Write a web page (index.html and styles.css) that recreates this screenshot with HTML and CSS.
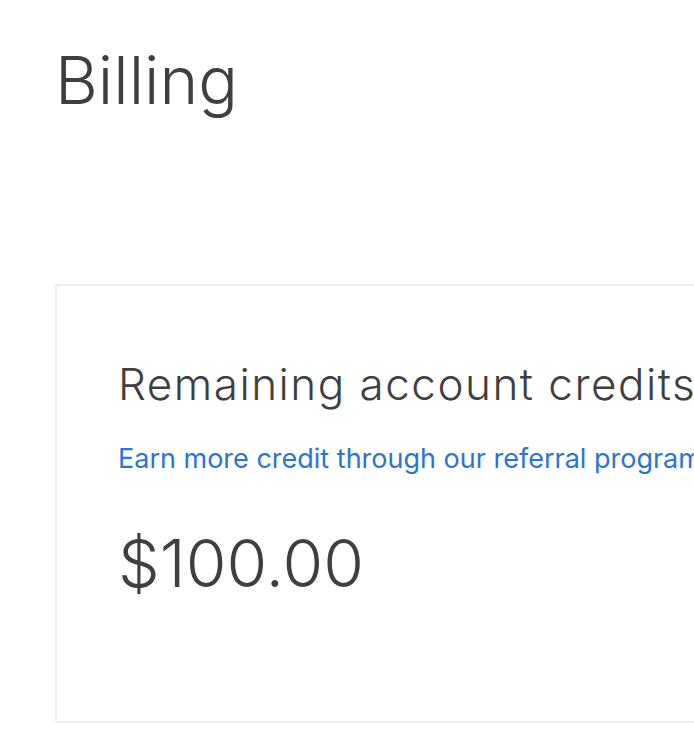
FILE: index.html
```html
<!DOCTYPE html>
<html lang="en">
<head>
<meta charset="utf-8">
<title>Billing</title>
<link rel="stylesheet" href="styles.css">
</head>
<body>
<main class="page">
  <h1 class="page-title">Billing</h1>
  <section class="card">
    <h2 class="card-title">Remaining account credits</h2>
    <a class="card-link" href="#">Earn more credit through our referral program</a>
    <div class="amount">$100.00</div>
  </section>
</main>
</body>
</html>
```

FILE: styles.css
```css
html, body {
  margin: 0;
  padding: 0;
  background: #ffffff;
  overflow: hidden;
}

body {
  font-family: Inter, "Liberation Sans", sans-serif;
  color: #3f3f3f;
}

.page {
  padding-left: 55px;
  width: 1100px;
}

.page-title {
  margin: 47px 0 0 0;
  font-size: 66px;
  line-height: 1;
  font-weight: 300;
  color: #3f3f3f;
}

.card {
  margin-top: 171px;
  width: 900px;
  border: 2px solid #ececec;
  border-radius: 3px;
  padding: 76px 62px 125px 61px;
  display: flex;
  flex-direction: column;
  align-items: flex-start;
  background: #fff;
}

.card-title {
  margin: 0;
  font-size: 44px;
  line-height: 1;
  font-weight: 350;
  letter-spacing: 1.5px;
  white-space: nowrap;
}

.card-link {
  margin-top: 39px;
  font-size: 27px;
  line-height: 1;
  color: #2b74d3;
  text-decoration: none;
  white-space: nowrap;
}

.amount {
  margin-top: 58px;
  font-size: 66px;
  line-height: 1;
  font-weight: 300;
}
```
